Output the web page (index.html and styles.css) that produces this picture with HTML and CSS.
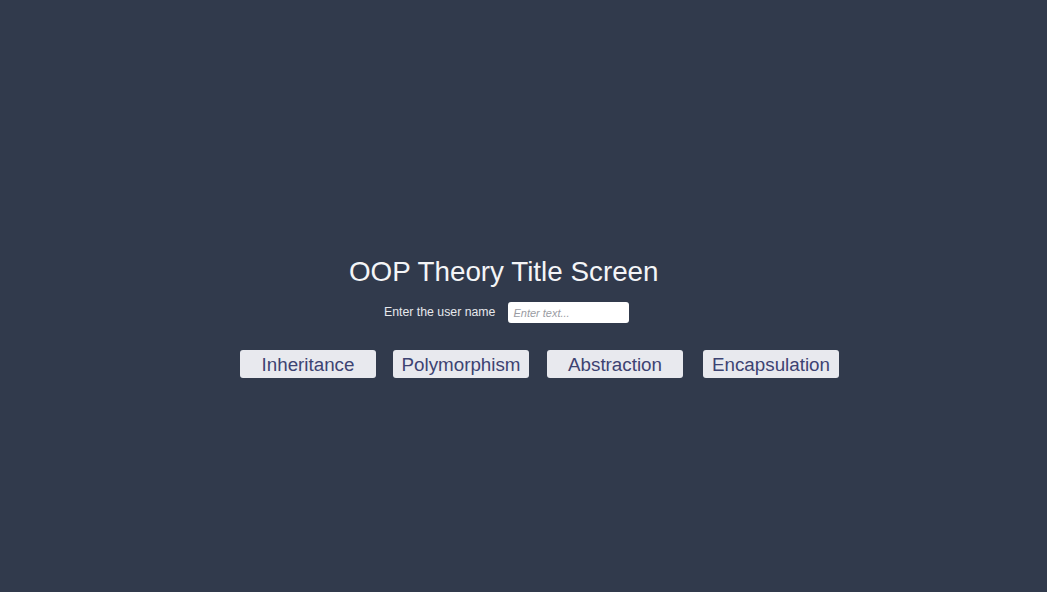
FILE: index.html
```html
<!DOCTYPE html>
<html>
<head>
<meta charset="utf-8">
<link rel="stylesheet" href="styles.css">
</head>
<body>
<main class="screen">
  <h1 class="title">OOP Theory Title Screen</h1>
  <div class="name-row">
    <label class="name-label" for="user">Enter the user name</label>
    <input class="name-input" id="user" type="text" placeholder="Enter text...">
  </div>
  <div class="buttons">
    <button class="btn">Inheritance</button>
    <button class="btn">Polymorphism</button>
    <button class="btn">Abstraction</button>
    <button class="btn">Encapsulation</button>
  </div>
</main>
</body>
</html>
```

FILE: styles.css
```css
html, body {
  margin: 0;
  padding: 0;
}
body {
  width: 1047px;
  height: 592px;
  background: #313a4c;
  font-family: "Liberation Sans", Arial, sans-serif;
  overflow: hidden;
}
.screen {
  display: flex;
  flex-direction: column;
  padding-top: 258px;
}
.title {
  margin: 0 0 0 349px;
  font-size: 27.8px;
  line-height: 28px;
  font-weight: normal;
  color: #f4f5f7;
  white-space: nowrap;
}
.name-row {
  display: flex;
  align-items: center;
  margin-top: 16px;
  padding-left: 384px;
  gap: 13px;
}
.name-label {
  font-size: 12.3px;
  line-height: 14px;
  padding-bottom: 2px;
  color: #e6e8ec;
  white-space: nowrap;
}
.name-input {
  box-sizing: border-box;
  width: 121px;
  height: 21px;
  margin: 0;
  border: none;
  border-radius: 3px;
  background: #ffffff;
  padding: 0 5px;
  font-family: "Liberation Sans", Arial, sans-serif;
  font-size: 11px;
  outline: none;
}
.name-input::placeholder {
  color: #9a9ca3;
  font-style: italic;
}
.buttons {
  display: flex;
  margin-top: 27px;
  padding-left: 240px;
  gap: 17px;
}
.btn {
  box-sizing: border-box;
  width: 136px;
  height: 28px;
  margin: 0;
  padding: 1px 0 0;
  border: none;
  border-radius: 3px;
  background: #e8e9ee;
  color: #3d4372;
  font-family: "Liberation Sans", Arial, sans-serif;
  font-size: 18.8px;
  line-height: 27px;
}
.btn:nth-child(3) { margin-left: 1px; }
.btn:nth-child(4) { margin-left: 3px; }
```
